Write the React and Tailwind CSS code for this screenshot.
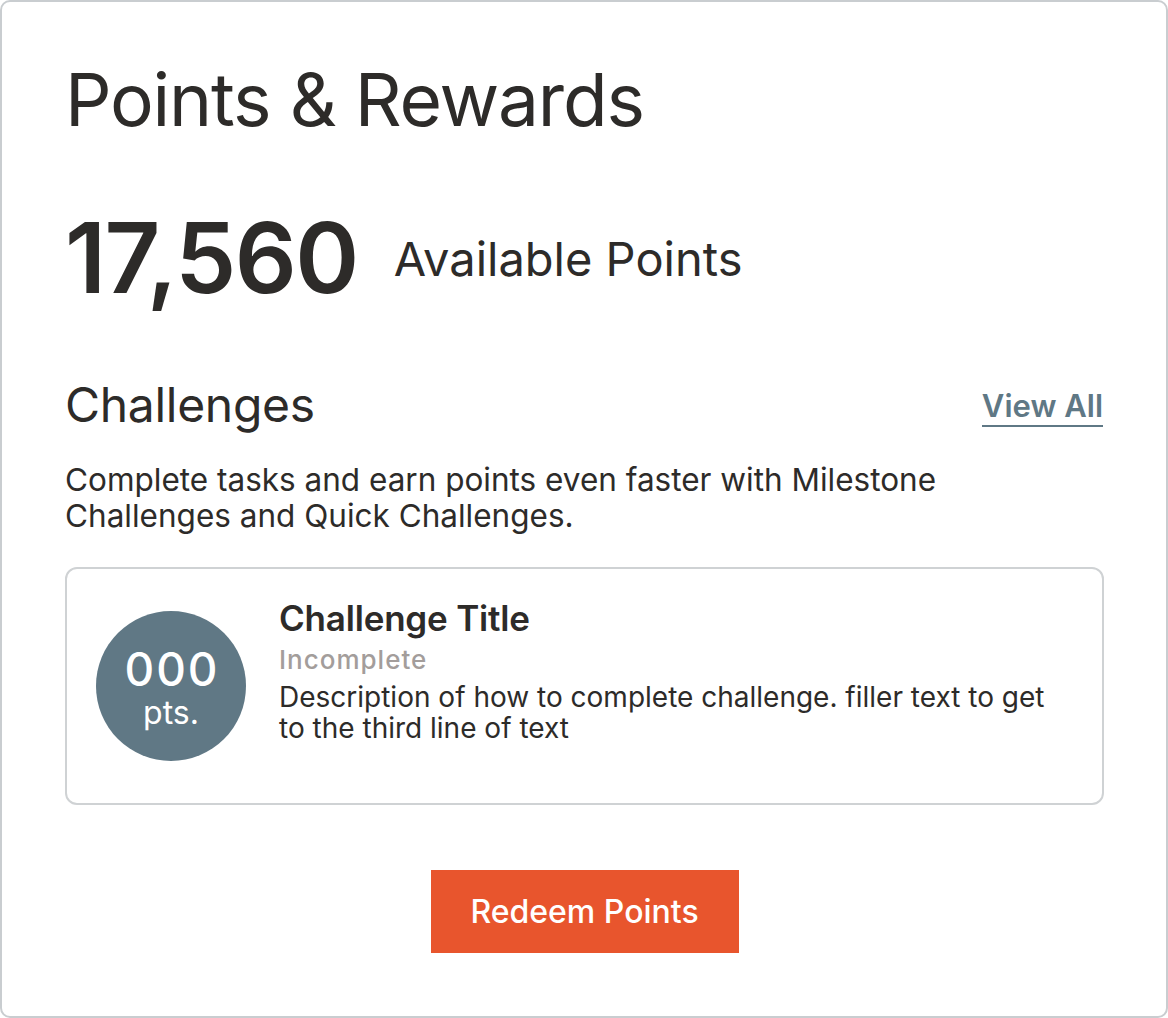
export default function App() {
  const font = { fontFamily: "Inter, 'Noto Sans', sans-serif" };
  return (
    <div className="w-[1168px] h-[1018px] bg-white" style={font}>
      <div className="w-full h-full border-2 border-[#c9cdd0] rounded-[10px] pl-[63px] pr-[62px] pt-[56px] flex flex-col text-[#2d2b29]">
        <h1 className="text-[73px] leading-[84px] font-normal tracking-[-1.2px]">Points &amp; Rewards</h1>
        <div className="flex items-start mt-[61px] h-[110px]">
          <span className="text-[97px] leading-[110px] font-semibold tracking-[-1.5px]">17,560</span>
          <span className="text-[47px] leading-[56px] ml-[36px] mt-[28px]">Available Points</span>
        </div>
        <div className="flex items-start justify-between mt-[64px] h-[56px]">
          <h2 className="text-[48px] leading-[56px] tracking-[-0.3px]">Challenges</h2>
          <a className="text-[31px] font-semibold text-[#5f7885] border-b-2 border-[#5f7885] leading-[32px] pb-[3px] mt-[13px] mr-[1px]">View All</a>
        </div>
        <p className="text-[31.5px] leading-[36px] mt-[29px] w-[920px]">
          Complete tasks and earn points even faster with Milestone Challenges and Quick Challenges.
        </p>
        <div className="mt-[33px] h-[238px] border-2 border-[#cfd2d4] rounded-[12px] flex pl-[29px] shrink-0">
          <div className="w-[150px] h-[150px] rounded-full bg-[#607885] flex flex-col items-center text-white mt-[42px] pt-[35px] shrink-0">
            <span className="text-[46px] leading-[46px] font-medium tracking-[2px] pl-[2px]">000</span>
            <span className="text-[32px] leading-[32px] mt-[5px]">pts.</span>
          </div>
          <div className="ml-[33px] flex flex-col pt-[29px]">
            <span className="text-[35px] leading-[40px] font-semibold tracking-[-0.2px]">Challenge Title</span>
            <span className="text-[26px] leading-[32px] font-medium text-[#a39d9b] tracking-[1px] mt-[6px]">Incomplete</span>
            <span className="text-[28px] leading-[31px] w-[780px] mt-[6px]">Description of how to complete challenge. filler text to get to the third line of text</span>
          </div>
        </div>
        <div className="flex justify-center mt-[65px]">
          <button className="w-[308px] h-[83px] bg-[#e8552d] text-white text-[32px] font-medium">Redeem Points</button>
        </div>
      </div>
    </div>
  );
}
